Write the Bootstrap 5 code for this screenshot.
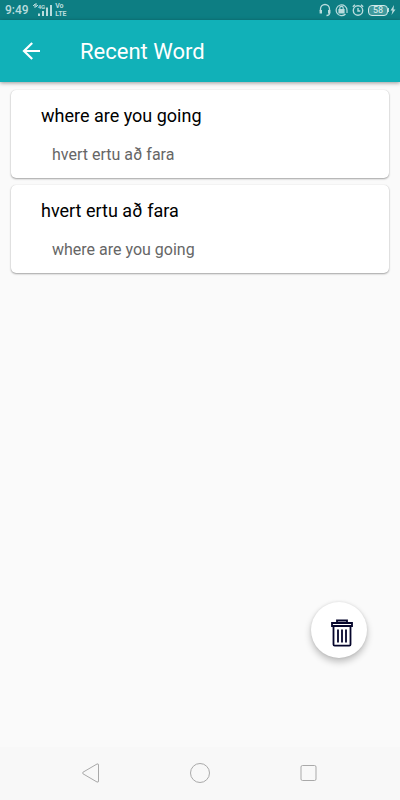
<!DOCTYPE html>
<html lang="en">
<head>
<meta charset="utf-8">
<meta name="viewport" content="width=device-width, initial-scale=1">
<title>Recent Word</title>
<link href="https://cdn.jsdelivr.net/npm/bootstrap@5.3.0/dist/css/bootstrap.min.css" rel="stylesheet">
<style>
  body { font-family: Roboto, "Noto Sans", sans-serif; background: #fafafa; color: #000; }
  svg { display: block; fill: none; }
  .status-bar { background: #0d7e83; color: #b9dcdd; height: 20px; padding: 0 4px 0 5px; line-height: 20px; }
  .clock { font-size: 12px; font-weight: 500; }
  .net-type { font-size: 6px; line-height: 6px; font-weight: 700; }
  .signal { margin-left: -7px; }
  .volte { font-size: 7px; line-height: 8px; font-weight: 700; margin-left: 3px; }
  .battery-level { font-size: 9px; line-height: 9px; width: 20px; border: 1px solid currentColor; border-radius: 4px; background: #3f999c; color: #cfe8e8; font-weight: 500; }
  .app-bar { background: #11b1b8; height: 62px; padding: 0 20px; box-shadow: 0 1px 4px rgba(0,0,0,.4); z-index: 1; }
  .app-title { font-size: 22px; line-height: 28px; margin: 2px 0 0 38px; }
  .word-list { padding: 8px 11px; gap: 7px; }
  .word-card { border: 0; border-radius: 5px; height: 88px; padding: 14px 30px 0; box-shadow: 0 1px 2px rgba(0,0,0,.35), 0 0 1px rgba(0,0,0,.15); }
  .word { font-size: 18px; line-height: 24px; }
  .meaning { font-size: 16px; line-height: 20px; margin: 17px 0 0 11px; color: #666; }
  .fab { width: 56px; height: 56px; margin: 0 33px 89px; padding: 6px 0 0 6px; background: #fff; box-shadow: 0 4px 7px rgba(0,0,0,.24), 0 0 3px rgba(0,0,0,.1); }
  .nav-keys { background: #f8f8f8; height: 53px; padding: 0 9% 1px; }
</style>
<script src="https://cdn.jsdelivr.net/npm/bootstrap@5.3.0/dist/js/bootstrap.bundle.min.js"></script>
</head>
<body class="d-flex flex-column min-vh-100">
  <div class="status-bar d-flex justify-content-between align-items-center">
    <div class="d-flex align-items-center">
      <span class="clock">9:49</span>
      <svg width="5" height="6" viewBox="0 0 5 6" class="ms-1 mb-2" stroke="currentColor" stroke-width="1" aria-hidden="true"><path d="M0 3l2-2v4M3 0v4l2-2"/></svg>
      <span class="net-type align-self-start pt-1">4G</span>
      <svg class="signal" width="14" height="12" viewBox="0 0 14 12" aria-hidden="true"><path fill="currentColor" d="M0 9.500h2V12H0zM4 7h2v5H4zM8 3.500h2V12H8zM12 1h2v11h-2z"/></svg>
      <span class="volte">Vo<br>LTE</span>
    </div>
    <div class="d-flex align-items-center gap-1">
      <svg width="12" height="14" viewBox="0 0 12 14" stroke="currentColor" stroke-width="1.300" aria-hidden="true"><path d="M1.500 8V6a4.500 4.500 0 0 1 9 0v4q0 2.500-3 2.500"/><path d="M1.800 7v3.500M10.200 7v3.500" stroke-width="2.400"/></svg>
      <svg width="13" height="14" viewBox="0 0 13 14" stroke="currentColor" stroke-width="1.200" aria-hidden="true"><path d="M10.500 11A5.400 5.400 0 1 1 12 7.500V10M4.800 6.500V5a1.700 1.700 0 0 1 3.400 0v1.500"/><path d="M4 6.500h5V10H4z" fill="currentColor"/></svg>
      <svg width="12" height="14" viewBox="0 0 12 14" stroke="currentColor" stroke-width="1.400" aria-hidden="true"><circle cx="6" cy="7.500" r="4.700"/><path d="M6 5v3h2.300M.8 3.800L3 1.800M11.200 3.800L9 1.800"/></svg>
      <div class="d-flex align-items-center">
        <span class="battery-level text-center">58</span>
        <svg width="8" height="10" viewBox="0 0 8 10" aria-hidden="true"><path d="M0 3h1v4H0zM6 0L2.500 5.500h2L3.500 10l4-5.500h-2z" fill="currentColor"/></svg>
      </div>
    </div>
  </div>

  <header class="app-bar d-flex align-items-center text-white position-relative">
    <button type="button" class="btn p-0 border-0 text-white" aria-label="Back">
      <svg width="22" height="22" viewBox="0 0 22 22" stroke="currentColor" stroke-width="2.200"><path d="M20 11H4M12.200 3L4 11l8.200 8"/></svg>
    </button>
    <h1 class="app-title fw-normal">Recent Word</h1>
  </header>

  <main class="flex-grow-1 d-flex flex-column">
    <div class="word-list d-flex flex-column">
      <article class="card word-card">
        <h2 class="word mb-0 fw-normal">where are you going</h2>
        <p class="meaning">hvert ertu að fara</p>
      </article>
      <article class="card word-card">
        <h2 class="word mb-0 fw-normal">hvert ertu að fara</h2>
        <p class="meaning">where are you going</p>
      </article>
    </div>
    <button type="button" class="fab btn border-0 rounded-circle mt-auto align-self-end d-flex align-items-center justify-content-center" aria-label="Clear recent words">
      <svg width="22" height="28" viewBox="0 0 22 28" stroke="#06062c" stroke-width="1.800"><path d="M6 4V1.500h10V4M1 4h20v3H1zM2.500 7v18.500q0 1.200 1.200 1.200h14.600q1.200 0 1.200-1.200V7M7 10.500v13M11 10.500v13M15 10.500v13"/></svg>
    </button>
  </main>

  <nav class="nav-keys d-flex align-items-center justify-content-around" aria-label="System navigation">
    <button type="button" class="btn p-0 border-0" aria-label="Back"><svg width="20" height="20" viewBox="0 0 20 20" stroke="#a9a9a9"><path d="M2 9.200L16 1q1.500-.6 1.500 1v16q0 1.600-1.500 1L2 10.800q-1-.8 0-1.600z"/></svg></button>
    <button type="button" class="btn p-0 border-0" aria-label="Home"><svg width="20" height="20" viewBox="0 0 20 20" stroke="#a9a9a9"><circle cx="10" cy="10" r="9.500"/></svg></button>
    <button type="button" class="btn p-0 border-0" aria-label="Recent apps"><svg width="20" height="20" viewBox="0 0 20 20" stroke="#a9a9a9"><rect x="2" y="2.500" width="15" height="15" rx="1.500"/></svg></button>
  </nav>
</body>
</html>
